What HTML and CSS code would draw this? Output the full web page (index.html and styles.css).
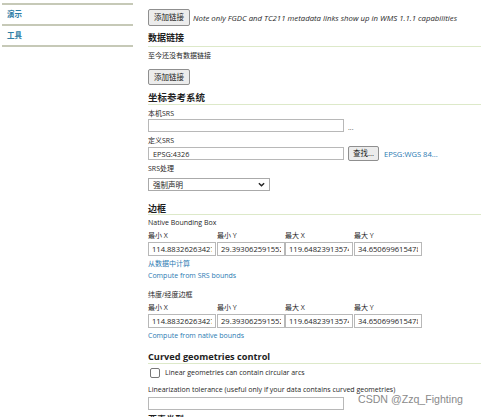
FILE: index.html
```html
<!DOCTYPE html>
<html>
<head>
<meta charset="utf-8">
<link rel="stylesheet" href="styles.css">
</head>
<body>
<div class="page">
  <nav class="side">
    <a class="side-item">演示</a>
    <a class="side-item">工具</a>
  </nav>
  <main class="main">
    <div class="row r-first">
      <button class="btn">添加链接</button>
      <span class="note">Note only FGDC and TC211 metadata links show up in WMS 1.1.1 capabilities</span>
    </div>
    <h3 class="sec s-data">数据链接</h3>
    <p class="txt t-none">至今还没有数据链接</p>
    <button class="btn b-add2">添加链接</button>
    <h3 class="sec s-crs">坐标参考系统</h3>
    <div class="lbl l-native">本机SRS</div>
    <div class="row">
      <input class="inp wide" type="text" value="">
      <span class="dots">...</span>
    </div>
    <div class="lbl l-decl">定义SRS</div>
    <div class="row r-decl">
      <input class="inp wide" type="text" value="EPSG:4326">
      <button class="btn b-find">查找...</button>
      <a class="link l-wgs">EPSG:WGS 84...</a>
    </div>
    <div class="lbl l-handle">SRS处理</div>
    <div class="select"><span>强制声明</span><svg class="chev" viewBox="0 0 8 5" width="7" height="5"><path d="M1 1 L4 4 L7 1" fill="none" stroke="#222" stroke-width="1.6"/></svg></div>
    <h3 class="sec s-bbox">边框</h3>
    <div class="lbl l-nbb">Native Bounding Box</div>
    <div class="grid4 g-lbl">
      <span>最小 X</span><span>最小 Y</span><span>最大 X</span><span>最大 Y</span>
    </div>
    <div class="grid4 g-inp">
      <input class="inp" type="text" value="114.883262634277">
      <input class="inp" type="text" value="29.3930625915527">
      <input class="inp" type="text" value="119.648239135742">
      <input class="inp" type="text" value="34.6506996154785">
    </div>
    <a class="link lk l-calc">从数据中计算</a>
    <a class="link lk l-srs">Compute from SRS bounds</a>
    <div class="lbl l-latlon">纬度/经度边框</div>
    <div class="grid4 g-lbl">
      <span>最小 X</span><span>最小 Y</span><span>最大 X</span><span>最大 Y</span>
    </div>
    <div class="grid4 g-inp">
      <input class="inp" type="text" value="114.883262634277">
      <input class="inp" type="text" value="29.3930625915527">
      <input class="inp" type="text" value="119.648239135742">
      <input class="inp" type="text" value="34.6506996154785">
    </div>
    <a class="link lk l-nat">Compute from native bounds</a>
    <h3 class="sec s-curved">Curved geometries control</h3>
    <label class="chk-row"><span class="chk"></span>Linear geometries can contain circular arcs</label>
    <div class="lbl l-tol">Linearization tolerance (useful only if your data contains curved geometries)</div>
    <input class="inp wide i-tol" type="text" value="">
    <h3 class="sec s-feat">要素类型</h3>
  </main>
</div>
<div class="watermark">CSDN @Zzq_Fighting</div>
</body>
</html>
```

FILE: styles.css
```css
* { box-sizing: border-box; }
html, body { margin: 0; padding: 0; background: #fff; }
body {
  width: 481px; height: 417px; overflow: hidden; position: relative;
  font-family: "Open Sans", "Noto Sans CJK SC", sans-serif;
  font-size: 7px; color: #262626;
}
.page { display: flex; align-items: flex-start; }
.side {
  width: 131px; margin: 3px 0 0 2px;
  display: flex; flex-direction: column;
  border-top: 2px solid #c6c9b7;
}
.side-item {
  display: block; height: 21px; line-height: 19px;
  padding-left: 5px; border-bottom: 2px solid #c6c9b7;
  color: #2f7ea6; font-weight: bold; font-size: 7.5px;
}
.main { margin-left: 15px; padding-top: 9px; display: flex; flex-direction: column; align-items: flex-start; width: 333px; }
.row { display: flex; align-items: center; gap: 4px; }
.r-first { height: 17px; }
.btn {
  font-family: inherit; font-size: 7.5px; color: #222;
  background: #ececec; border: 1px solid #8f8f8f; border-radius: 2px;
  padding: 0 5px; height: 17px; line-height: 15px; margin: 0;
}
.note { font-style: italic; font-size: 7.8px; color: #2a2a2a; margin-left: -1px; white-space: nowrap; }
.sec {
  margin: 0; align-self: stretch; font-weight: bold; color: #1e1e1e;
  font-size: 9px; border-bottom: 1px solid #dde9c9;
}
.s-data { padding-top: 6px; line-height: 12px; padding-bottom: 2px; }
.txt { margin: 3px 0 0; line-height: 12px; }
.b-add2 { margin-top: 7px; height: 16px; line-height: 14px; }
.s-crs { margin-top: 7px; line-height: 12px; font-size: 9.5px; }
.lbl { line-height: 10px; white-space: nowrap; }
.l-native { margin-top: 4px; }
.inp {
  font-family: inherit; font-size: 7.3px; color: #262626;
  height: 13px; border: 1px solid #b8b8b8; padding: 0 4px; margin: 0;
  background: #fff; outline: none;
}
.wide { width: 196px; }
.dots { color: #555; margin-left: 0; padding-top: 4px; }
.l-decl { margin-top: 4px; }
.r-decl { height: 15px; }
.b-find { height: 15px; line-height: 13px; padding: 0 4px; }
.link { color: #2b7ab2; }
.l-wgs { margin-left: 1px; font-size: 7.6px; color: #2b7ab2; }
.l-handle { margin-top: 3px; }
.select {
  margin-top: 4px; width: 122px; height: 13px;
  border: 1px solid #aaa; display: flex; align-items: center;
  justify-content: space-between; padding: 0 4px 0 4px; color: #222;
  font-size: 7.5px;
}
.chev { display: block; }
.s-bbox { margin-top: 12px; line-height: 11px; }
.l-nbb { margin-top: 3px; }
.grid4 { display: grid; grid-template-columns: 69px 68px 69px 68px; }
.g-lbl { margin-top: 3px; line-height: 10px; }
.g-inp { margin-top: 1px; }
.g-inp .inp { height: 14px; width: 68px; padding: 0 3px; font-size: 7.6px; }
.lk { display: block; line-height: 10px; }
.l-calc { margin-top: 3px; }
.l-srs { margin-top: 2px; }
.l-latlon { margin-top: 9px; }
.l-nat { margin-top: 3px; }
.s-curved { margin-top: 9px; line-height: 13px; font-size: 9.2px; }
.chk-row { display: flex; align-items: center; gap: 5px; margin-top: 3px; line-height: 12px; padding-left: 2px; }
.chk { width: 10px; height: 10px; border: 1px solid #777; border-radius: 2px; background: #fff; }
.l-tol { margin-top: 6px; }
.i-tol { margin-top: 2px; }
.s-feat { margin-top: 4px; line-height: 12px; border-bottom: none; }
.watermark {
  position: absolute; left: 358px; top: 393px; white-space: nowrap;
  font-family: "Liberation Sans", Arial, sans-serif;
  font-size: 10.6px; color: #8a8a8a;
}
```
